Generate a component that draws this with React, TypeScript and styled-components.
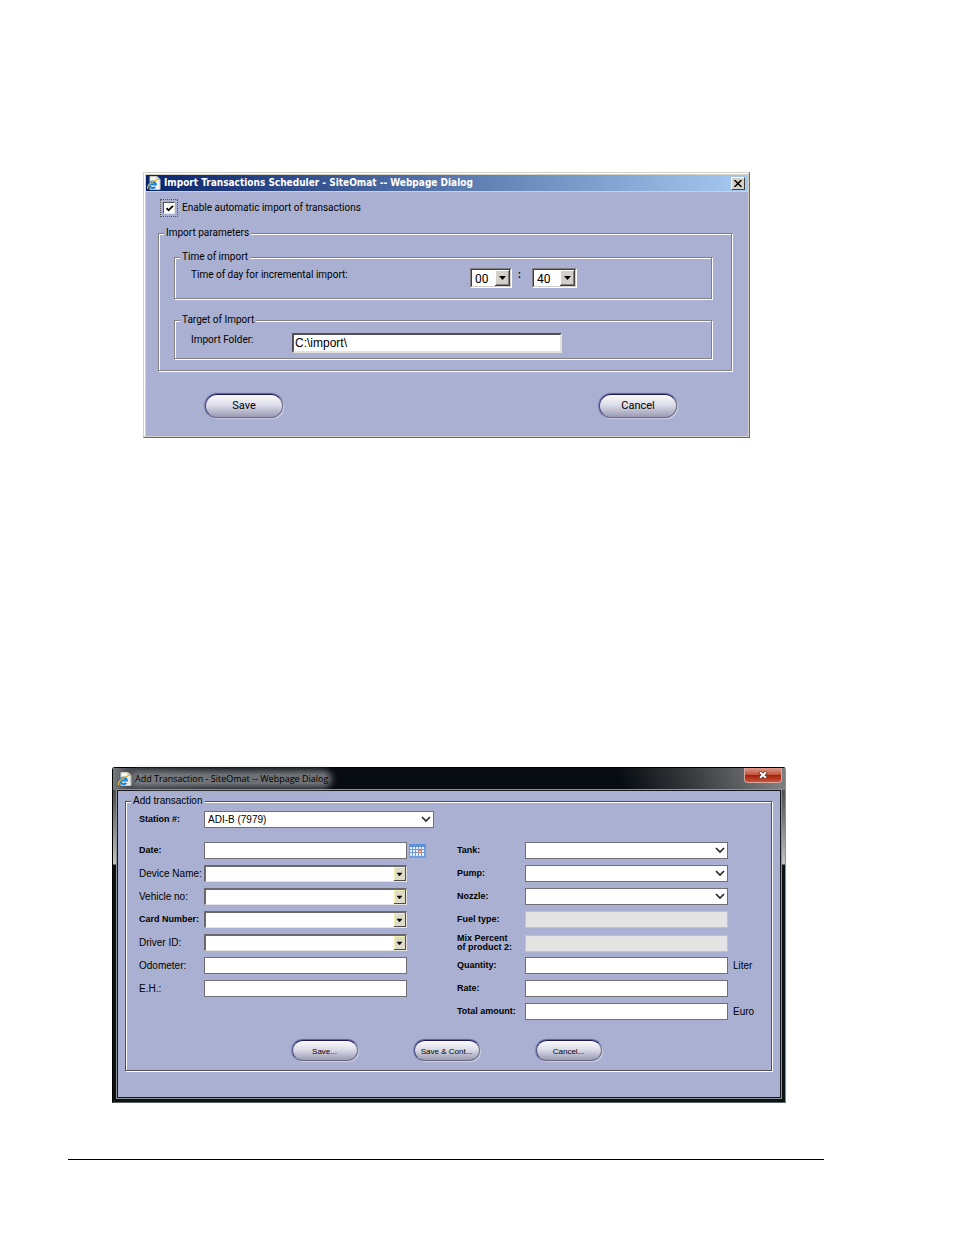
import React from "react";
import styled, { createGlobalStyle, css } from "styled-components";

const GlobalStyle = createGlobalStyle`
  *, *::before, *::after { box-sizing: border-box; }
  body { margin: 0; background: #fff; color: #000; }
  button, input, select { font: inherit; color: inherit; margin: 0; }
`;

const tahoma = `"DejaVu Sans Condensed", "DejaVu Sans", sans-serif`;
const roboto = `Roboto, "Liberation Sans", sans-serif`;
const arial = `"Liberation Sans", Arial, sans-serif`;
const segoe = `"Open Sans", "Noto Sans", sans-serif`;
const panel = "#aab0d1";

const Page = styled.main`
  display: flex;
  flex-direction: column;
  padding: 172px 130px 75px 68px;
`;

const FooterRule = styled.hr`
  width: 100%;
  height: 1px;
  margin: 56px 0 0;
  border: 0;
  background: #000;
`;

/* ---------- shared form parts ---------- */

/* Etched frame: a dark line with a white line below and to the right of it. */
const Group = styled.fieldset<{ $dark?: boolean }>`
  min-width: 0;
  margin: 0 1px 1px 0;
  padding: 0 0 0 1px;
  border: 1px solid ${(p) => (p.$dark ? "#50505c" : "#808080")};
  box-shadow: inset 1px 1px 0 #fff, 1px 1px 0 #fff;
`;

const Legend = styled.legend`
  margin-left: 4px;
  padding: 0 2px;
  background: ${panel};
  line-height: 12px;
`;

const GroupBody = styled.div<{ $pad: string; $gap?: number }>`
  display: flex;
  flex-direction: column;
  gap: ${(p) => p.$gap ?? 0}px;
  padding: ${(p) => p.$pad};
`;

const PillButton = styled.button<{ $small?: boolean }>`
  width: ${(p) => (p.$small ? 66 : 78)}px;
  height: ${(p) => (p.$small ? 21 : 24)}px;
  padding: ${(p) => (p.$small ? "2px 0 0" : "0")};
  border: 1px solid;
  border-color: #1d1a55 #6d6d82 #6a6a80 #4a4878;
  border-radius: 12px;
  background: linear-gradient(#fbfbfd, #dcdce8 45%, #9a9ab4);
  box-shadow: 0 -1px 1px #5b5fa0, -1px 0 1px #7f84b8, 1px 1px 1px #d5d8ea;
  font-family: ${(p) => (p.$small ? arial : roboto)};
  font-size: ${(p) => (p.$small ? 8 : 11)}px;
  line-height: 12px;
  text-align: center;
  white-space: nowrap;
`;

/* ---------- scheduler dialog (classic frame) ---------- */

const ClassicWindow = styled.section`
  margin: 0 74px 0 75px;
  border: 1px solid;
  border-color: #d4d0c8 #6b6964 #6b6964 #d4d0c8;
  font-family: ${roboto};
  font-size: 10px;
`;

const ClassicInner = styled.div`
  border: 1px solid;
  border-color: #fff #d4d0c8 #d4d0c8 #fff;
`;

const ClassicFrame = styled.div`
  border: solid #d4d0c8;
  border-width: 1px 0 0 1px;
`;

const ClassicTitleBar = styled.header`
  display: flex;
  align-items: center;
  gap: 3px;
  height: 17px;
  padding: 0 3px 0 1px;
  border-bottom: 1px solid #d4d0c8;
  background: linear-gradient(90deg, #0a246a, #a6caf0);
  color: #fff;
`;

const ClassicTitle = styled.h1`
  flex: 1;
  margin: 0;
  font-family: ${tahoma};
  font-size: 10px;
  font-weight: bold;
  line-height: 16px;
  white-space: nowrap;
`;

const ClassicClose = styled.button`
  display: flex;
  align-items: center;
  justify-content: center;
  width: 14px;
  height: 13px;
  padding: 0;
  border: 1px solid;
  border-color: #fff #404040 #404040 #fff;
  background: #d4d0c8;
`;

const ClassicBody = styled.div`
  padding: 7px 15px 18px 12px;
  background: ${panel};
`;

const CheckRow = styled.div`
  display: flex;
  align-items: center;
  gap: 4px;
  margin-bottom: 10px;
  padding-left: 2px;
  line-height: 18px;
`;

const FocusRing = styled.span`
  position: relative;
  display: flex;
  padding: 2px;
  border: 1px dotted #555;
  svg {
    position: absolute;
    left: 5px;
    top: 5px;
    pointer-events: none;
  }
`;

const Check = styled.input`
  appearance: none;
  width: 12px;
  height: 12px;
  border: 1px solid;
  border-color: #505050 #e8e6e0 #e8e6e0 #505050;
  background: #fff;
`;

const FieldLine = styled.div<{ $label: number }>`
  display: grid;
  grid-template-columns: ${(p) => p.$label}px auto 1fr;
  align-items: start;
  line-height: 14px;
`;

const TimePair = styled.div`
  display: flex;
  gap: 6px;
`;

const Colon = styled.span`
  width: 8px;
  font-weight: bold;
`;

const ClassicSelectBox = styled.span<{ $w: number }>`
  position: relative;
  display: flex;
  width: ${(p) => p.$w}px;
  height: 20px;
  border: 1px solid;
  border-color: #808080 #fff #fff #808080;
  svg {
    position: absolute;
    right: 1px;
    top: 1px;
    pointer-events: none;
  }
`;

const ClassicSelect = styled.select`
  appearance: none;
  width: 100%;
  padding: 1px 0 0 3px;
  border: 1px solid;
  border-color: #404040 #d4d0c8 #d4d0c8 #404040;
  border-radius: 0;
  background: #fff;
  font-family: ${roboto};
  font-size: 12px;
`;

const ClassicInput = styled.input`
  width: 270px;
  height: 20px;
  padding: 0 1px;
  border: 2px solid;
  border-color: #505050 #e4e2dc #e4e2dc #505050;
  background: #fff;
  font-family: ${arial};
  font-size: 12px;
`;

const ClassicActions = styled.div`
  display: flex;
  justify-content: space-between;
  padding: 22px 56px 0 47px;
`;

/* ---------- transaction dialog (glass frame) ---------- */

const GlassWindow = styled.section`
  margin: 329px 38px 0 44px;
  padding: 0 4px 4px;
  border: 1px solid;
  border-color: #000 #8a8f92 #5c6266 #000;
  border-radius: 3px 3px 0 0;
  background: linear-gradient(#30363a, #55595c 30px, #c4c4c4 96px, #0c1317 97px);
  font-family: ${arial};
  font-size: 10px;
`;

const GlassTitleBar = styled.header`
  display: flex;
  align-items: flex-start;
  height: 22px;
  margin: 0 -4px;
  padding: 0 3px 0 5px;
  background:
    linear-gradient(90deg, #777b7e, rgba(60, 64, 68, 0.5) 30px, transparent 110px),
    linear-gradient(70deg, transparent 75%, #34383b 85%, #7b7d7e 98%),
    #070c12;
`;

const GlassCaption = styled.div`
  display: flex;
  flex: 1;
  align-items: center;
  gap: 3px;
  height: 22px;
`;

const GlassTitle = styled.h2`
  margin: 0;
  border-radius: 6px;
  background: rgba(150, 152, 155, 0.72);
  box-shadow: 0 0 6px 4px rgba(150, 152, 155, 0.72);
  font-family: ${segoe};
  font-size: 9px;
  font-weight: normal;
  line-height: 10px;
  white-space: nowrap;
`;

const GlassClose = styled.button`
  display: flex;
  align-items: center;
  justify-content: center;
  width: 38px;
  height: 15px;
  padding: 0;
  border: 1px solid #d9a79c;
  border-top: 0;
  border-radius: 0 0 4px 4px;
  background: linear-gradient(#dd9a8c, #c4523c 48%, #a41f0c 52%, #c8563a);
`;

const GlassBody = styled.div`
  padding: 4px 7px 25px;
  border: 1px solid #15191d;
  background: ${panel};
  box-shadow: 0 0 0 1px #8d9295;
`;

const Columns = styled.div`
  display: grid;
  grid-template-columns: 318px 1fr;
  align-items: start;
`;

const Column = styled.div`
  display: flex;
  flex-direction: column;
  gap: 6px;
`;

const Row = styled.div<{ $label: number }>`
  display: grid;
  grid-template-columns: ${(p) => p.$label}px auto 1fr;
  align-items: center;
  height: 17px;
`;

const Label = styled.label<{ $bold?: boolean }>`
  font-size: ${(p) => (p.$bold ? 9 : 10)}px;
  font-weight: ${(p) => (p.$bold ? "bold" : "normal")};
  line-height: 9px;
  white-space: pre-line;
`;

const fieldBox = css`
  width: 203px;
  height: 17px;
  padding: 0 3px;
  border: 1px solid #6f6f73;
  border-radius: 0;
  background: #fff;
`;

const TextField = styled.input`
  ${fieldBox}
  &:disabled {
    border-color: #c2c2c6;
    background: #e4e4e4;
  }
`;

const SelectBox = styled.span`
  position: relative;
  display: flex;
  svg {
    position: absolute;
    right: 3px;
    top: 5px;
    pointer-events: none;
  }
`;

const FlatSelect = styled.select<{ $w?: number }>`
  ${fieldBox}
  appearance: none;
  width: ${(p) => p.$w ?? 203}px;
`;

const ComboSelect = styled(FlatSelect)`
  border-width: 2px 1px 1px 2px;
  border-color: #6a6a6e #e4e4e4 #e4e4e4 #6a6a6e;
`;

const ComboBox = styled(SelectBox)`
  svg {
    right: 1px;
    top: 2px;
  }
`;

const CalendarButton = styled.button`
  display: flex;
  margin-left: 2px;
  padding: 0;
  border: 0;
  background: none;
  justify-self: start;
`;

const Unit = styled.span`
  padding-left: 5px;
`;

const GlassActions = styled.div`
  display: flex;
  justify-content: center;
  gap: 56px;
  padding: 6px 17px 0 0;
`;

/* ---------- drawings ---------- */

const BrowserIcon = () => (
  <svg width="14" height="14" viewBox="0 0 14 14" aria-hidden="true">
    <path d="M3 0.500h7l3 3v10H3z" fill="#f6f6f2" stroke="#c9c9be" />
    <path d="M10 0.500v3h3" fill="#ddd" stroke="#b9b9ae" />
    <path d="M2.600 8.400h6.200A3.200 3.200 0 1 0 8.200 10.800" fill="none" stroke="#1f86d6" strokeWidth="2.200" />
    <path d="M1 13C-0.800 10.600 4.500 4.800 10 4.200" fill="none" stroke="#f0b429" strokeWidth="1.200" />
  </svg>
);

const ClassicArrow = () => (
  <svg width="15" height="16" viewBox="0 0 15 16" aria-hidden="true">
    <path d="M0 0h15v16H0z" fill="#404040" />
    <path d="M0 0h14v15H0z" fill="#fff" />
    <path d="M1 1h13v14H1z" fill="#808080" />
    <path d="M1 1h12v13H1z" fill="#d4d0c8" />
    <path d="M4 6h7L7.500 10z" fill="#000" />
  </svg>
);

const ComboArrow = () => (
  <svg width="12" height="14" viewBox="0 0 12 14" aria-hidden="true">
    <path d="M0 0h12v14H0z" fill="#4c4c44" />
    <path d="M0 0h11v13H0z" fill="#f4f0b8" />
    <path d="M1 1h10v12H1z" fill="#dedbc6" />
    <path d="M3 6h5L5.500 9z" fill="#000" stroke="#000" strokeWidth="0.500" />
  </svg>
);

const Chevron = () => (
  <svg width="10" height="7" viewBox="0 0 10 7" aria-hidden="true">
    <path d="M1 1l4 4 4-4" fill="none" stroke="#2a2a2e" strokeWidth="1.700" />
  </svg>
);

const CalendarIcon = () => (
  <svg width="17" height="14" viewBox="0 0 17 14" aria-hidden="true">
    <path d="M0 0h17v14H0z" fill="#6f9fe0" />
    <path d="M0 0h17v3H0z" fill="#5f8fd8" />
    <path
      d="M1 3h2v2H1zM4 3h2v2H4zM7 3h2v2H7zM10 3h2v2h-2zM13 3h2v2h-2zM1 6h2v2H1zM4 6h2v2H4zM7 6h2v2H7zM13 6h2v2h-2zM1 9h2v3H1zM4 9h2v3H4zM7 9h2v3H7zM10 9h2v3h-2zM13 9h2v3h-2z"
      fill="#e6f1ff"
    />
    <path d="M9.500 6.500h3v2h-3z" fill="#fff" stroke="#d8705a" />
  </svg>
);

/* ---------- fields ---------- */

type Kind = "text" | "combo" | "select" | "disabled";
type FieldSpec = { id: string; label: string; kind: Kind; bold?: boolean; unit?: string; calendar?: boolean };

const leftFields: FieldSpec[] = [
  { id: "date", label: "Date:", kind: "text", bold: true, calendar: true },
  { id: "device", label: "Device Name:", kind: "combo" },
  { id: "vehicle", label: "Vehicle no:", kind: "combo" },
  { id: "card", label: "Card Number:", kind: "combo", bold: true },
  { id: "driver", label: "Driver ID:", kind: "combo" },
  { id: "odometer", label: "Odometer:", kind: "text" },
  { id: "hours", label: "E.H.:", kind: "text" },
];

const rightFields: FieldSpec[] = [
  { id: "tank", label: "Tank:", kind: "select", bold: true },
  { id: "pump", label: "Pump:", kind: "select", bold: true },
  { id: "nozzle", label: "Nozzle:", kind: "select", bold: true },
  { id: "fuel", label: "Fuel type:", kind: "disabled", bold: true },
  { id: "mix", label: "Mix Percent\nof product 2:", kind: "disabled", bold: true },
  { id: "quantity", label: "Quantity:", kind: "text", bold: true, unit: "Liter" },
  { id: "rate", label: "Rate:", kind: "text", bold: true },
  { id: "total", label: "Total amount:", kind: "text", bold: true, unit: "Euro" },
];

const Control = ({ id, kind }: { id: string; kind: Kind }) => {
  if (kind === "combo")
    return (
      <ComboBox>
        <ComboSelect id={id}>
          <option value="" />
        </ComboSelect>
        <ComboArrow />
      </ComboBox>
    );
  if (kind === "select")
    return (
      <SelectBox>
        <FlatSelect id={id}>
          <option value="" />
        </FlatSelect>
        <Chevron />
      </SelectBox>
    );
  return <TextField id={id} type="text" disabled={kind === "disabled"} />;
};

const Fields = ({ items, labelWidth }: { items: FieldSpec[]; labelWidth: number }) => (
  <Column>
    {items.map((f) => (
      <Row key={f.id} $label={labelWidth}>
        <Label htmlFor={f.id} $bold={f.bold}>
          {f.label}
        </Label>
        <Control id={f.id} kind={f.kind} />
        {f.unit && <Unit>{f.unit}</Unit>}
        {f.calendar && (
          <CalendarButton type="button" aria-label="Pick a date">
            <CalendarIcon />
          </CalendarButton>
        )}
      </Row>
    ))}
  </Column>
);

const TimeSelect = ({ name, value, width }: { name: string; value: string; width: number }) => (
  <ClassicSelectBox $w={width}>
    <ClassicSelect aria-label={name} defaultValue={value}>
      <option>{value}</option>
    </ClassicSelect>
    <ClassicArrow />
  </ClassicSelectBox>
);

const SchedulerDialog = () => (
  <ClassicWindow>
    <ClassicInner>
      <ClassicFrame>
        <ClassicTitleBar>
          <BrowserIcon />
          <ClassicTitle>Import Transactions Scheduler - SiteOmat -- Webpage Dialog</ClassicTitle>
          <ClassicClose type="button" aria-label="Close">
            <svg width="8" height="7" viewBox="0 0 8 7" aria-hidden="true">
              <path d="M0.500 0l7 7M7.500 0l-7 7" stroke="#000" strokeWidth="1.500" />
            </svg>
          </ClassicClose>
        </ClassicTitleBar>
        <ClassicBody>
          <CheckRow>
            <FocusRing>
              <Check id="auto" type="checkbox" defaultChecked />
              <svg width="8" height="7" viewBox="0 0 8 7" aria-hidden="true">
                <path d="M0.500 3l2 2.300L7 0.800" fill="none" stroke="#000" strokeWidth="1.800" />
              </svg>
            </FocusRing>
            <label htmlFor="auto">Enable automatic import of transactions</label>
          </CheckRow>
          <Group>
            <Legend>Import parameters</Legend>
            <GroupBody $pad="12px 18px 10px 14px" $gap={14}>
              <Group>
                <Legend>Time of import</Legend>
                <GroupBody $pad="5px 15px 10px">
                  <FieldLine $label={279}>
                    <span>Time of day for incremental import:</span>
                    <TimePair>
                      <TimeSelect name="Hour" value="00" width={42} />
                      <Colon>:</Colon>
                      <TimeSelect name="Minute" value="40" width={45} />
                    </TimePair>
                  </FieldLine>
                </GroupBody>
              </Group>
              <Group>
                <Legend>Target of Import</Legend>
                <GroupBody $pad="7px 15px 5px">
                  <FieldLine $label={101}>
                    <label htmlFor="folder">Import Folder:</label>
                    <ClassicInput id="folder" type="text" defaultValue={"C:\\import\\"} />
                  </FieldLine>
                </GroupBody>
              </Group>
            </GroupBody>
          </Group>
          <ClassicActions>
            <PillButton type="button">Save</PillButton>
            <PillButton type="button">Cancel</PillButton>
          </ClassicActions>
        </ClassicBody>
      </ClassicFrame>
    </ClassicInner>
  </ClassicWindow>
);

const TransactionDialog = () => (
  <GlassWindow>
    <GlassTitleBar>
      <GlassCaption>
        <BrowserIcon />
        <GlassTitle>Add Transaction - SiteOmat -- Webpage Dialog</GlassTitle>
      </GlassCaption>
      <GlassClose type="button" aria-label="Close">
        <svg width="10" height="8" viewBox="0 0 10 8" aria-hidden="true">
          <path d="M1.500 1l7 6M8.500 1l-7 6" stroke="#5a2a24" strokeWidth="3.400" />
          <path d="M2 1.200l6 5.600M8 1.200l-6 5.600" stroke="#fff" strokeWidth="2" />
        </svg>
      </GlassClose>
    </GlassTitleBar>
    <GlassBody>
      <Group $dark>
        <Legend>Add transaction</Legend>
        <GroupBody $pad="4px 0 9px 12px" $gap={14}>
          <Row $label={65}>
            <Label htmlFor="station" $bold>
              Station #:
            </Label>
            <SelectBox>
              <FlatSelect id="station" $w={230}>
                <option>ADI-B (7979)</option>
              </FlatSelect>
              <Chevron />
            </SelectBox>
          </Row>
          <Columns>
            <Fields items={leftFields} labelWidth={65} />
            <Fields items={rightFields} labelWidth={68} />
          </Columns>
          <GlassActions>
            <PillButton type="button" $small>
              Save...
            </PillButton>
            <PillButton type="button" $small>
              Save &amp; Cont...
            </PillButton>
            <PillButton type="button" $small>
              Cancel...
            </PillButton>
          </GlassActions>
        </GroupBody>
      </Group>
    </GlassBody>
  </GlassWindow>
);

export default function App() {
  return (
    <>
      <GlobalStyle />
      <Page>
        <SchedulerDialog />
        <TransactionDialog />
        <FooterRule />
      </Page>
    </>
  );
}
